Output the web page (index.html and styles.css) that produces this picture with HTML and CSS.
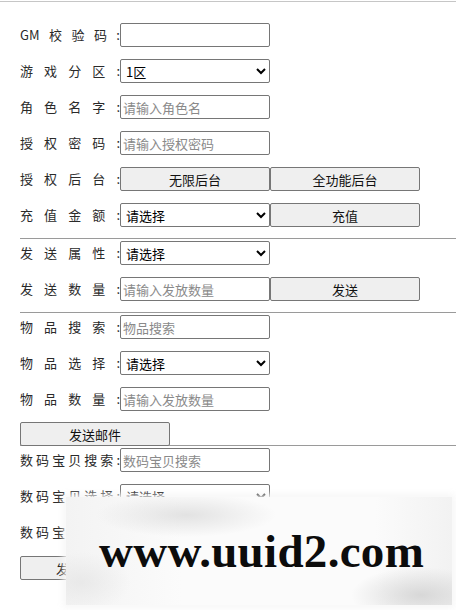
FILE: index.html
```html
<!DOCTYPE html>
<html lang="zh-CN">
<head>
<meta charset="utf-8">
<title>GM</title>
<link rel="stylesheet" href="styles.css">
</head>
<body>
<div class="topline"></div>
<form class="panel">
  <div class="row"><label class="lbl">GM校验码:</label><input class="field" type="text"></div>
  <div class="row"><label class="lbl">游戏分区:</label><select class="field sel"><option>1区</option></select></div>
  <div class="row"><label class="lbl">角色名字:</label><input class="field" type="text" placeholder="请输入角色名"></div>
  <div class="row"><label class="lbl">授权密码:</label><input class="field" type="text" placeholder="请输入授权密码"></div>
  <div class="row"><label class="lbl">授权后台:</label><button type="button" class="btn">无限后台</button><button type="button" class="btn">全功能后台</button></div>
  <div class="row"><label class="lbl">充值金额:</label><select class="field sel"><option>请选择</option></select><button type="button" class="btn">充值</button></div>
  <div class="sep"></div>
  <div class="row"><label class="lbl">发送属性:</label><select class="field sel"><option>请选择</option></select></div>
  <div class="row"><label class="lbl">发送数量:</label><input class="field" type="text" placeholder="请输入发放数量"><button type="button" class="btn">发送</button></div>
  <div class="sep"></div>
  <div class="row"><label class="lbl">物品搜索:</label><input class="field" type="text" placeholder="物品搜索"></div>
  <div class="row"><label class="lbl">物品选择:</label><select class="field sel"><option>请选择</option></select></div>
  <div class="row"><label class="lbl">物品数量:</label><input class="field" type="text" placeholder="请输入发放数量"></div>
  <div class="row row-tight"><button type="button" class="btn">发送邮件</button></div>
  <div class="sep"></div>
  <div class="row"><label class="lbl">数码宝贝搜索:</label><input class="field" type="text" placeholder="数码宝贝搜索"></div>
  <div class="row"><label class="lbl">数码宝贝选择:</label><select class="field sel"><option>请选择</option></select></div>
  <div class="row"><label class="lbl">数码宝贝数量:</label><input class="field" type="text" placeholder="请输入发放数量"></div>
  <div class="row"><button type="button" class="btn">发送数码宝贝</button></div>
</form>
<div class="watermark"><span class="wm-text">www.uuid2.com</span></div>
</body>
</html>
```
FILE: styles.css
```css
html, body {
  margin: 0;
  padding: 0;
  background: #ffffff;
}
body {
  position: relative;
  width: 456px;
  height: 610px;
  overflow: hidden;
  font-family: "Noto Sans CJK SC", "Noto Sans", "Liberation Sans", sans-serif;
  font-size: 13px;
  color: #2a2a2a;
}
.topline {
  margin-top: 1px;
  height: 1px;
  background: #c6c6c6;
}
.panel {
  padding: 21px 0 0 20px;
  margin: 0;
}
.row {
  display: flex;
  align-items: center;
  height: 24px;
  margin-bottom: 12px;
}
.row-tight {
  margin-bottom: 0;
  margin-top: -1px;
}
.lbl {
  display: inline-block;
  width: 100px;
  text-align: justify;
  text-align-last: justify;
  line-height: 24px;
  white-space: nowrap;
  color: #2a2a2a;
}
.field {
  box-sizing: border-box;
  width: 150px;
  height: 24px;
  margin: 0;
  padding: 0 2px;
  border: 1px solid #767676;
  border-radius: 2px;
  background: #fff;
  font-family: inherit;
  font-size: 13px;
  color: #000;
}
.field::placeholder {
  color: #8a8a8a;
}
.sel {
  padding: 0 0 0 1px;
}
.btn {
  box-sizing: border-box;
  width: 150px;
  height: 24px;
  margin: 0;
  padding: 0;
  border: 1px solid #767676;
  border-radius: 2px;
  background: #efefef;
  font-family: inherit;
  font-size: 13px;
  color: #111;
}
.sep {
  height: 1px;
  margin: -1px 0 2px 0;
  background: #9a9a9a;
}
.watermark {
  position: absolute;
  left: 66px;
  top: 497px;
  width: 386px;
  height: 108px;
  background:
    radial-gradient(ellipse 90px 22px at 120px 18px, rgba(218,218,218,0.75), rgba(255,255,255,0) 100%),
    radial-gradient(ellipse 50px 30px at 15px 85px, rgba(228,228,228,0.7), rgba(255,255,255,0) 100%),
    radial-gradient(ellipse 70px 28px at 355px 98px, rgba(212,212,212,0.9), rgba(255,255,255,0) 100%),
    linear-gradient(90deg, #f3f3f3, #fbfbfb 30%, #fbfbfb 80%, #f2f2f2);
  box-shadow: 0 0 6px 3px rgba(246,246,246,0.9);
  display: flex;
  align-items: flex-start;
}
.wm-text {
  display: block;
  margin: 26px 0 0 33px;
  font-family: "Liberation Serif", "DejaVu Serif", serif;
  font-weight: bold;
  font-size: 47px;
  line-height: 56px;
  color: #0c0c0c;
  letter-spacing: 0.3px;
}
```
